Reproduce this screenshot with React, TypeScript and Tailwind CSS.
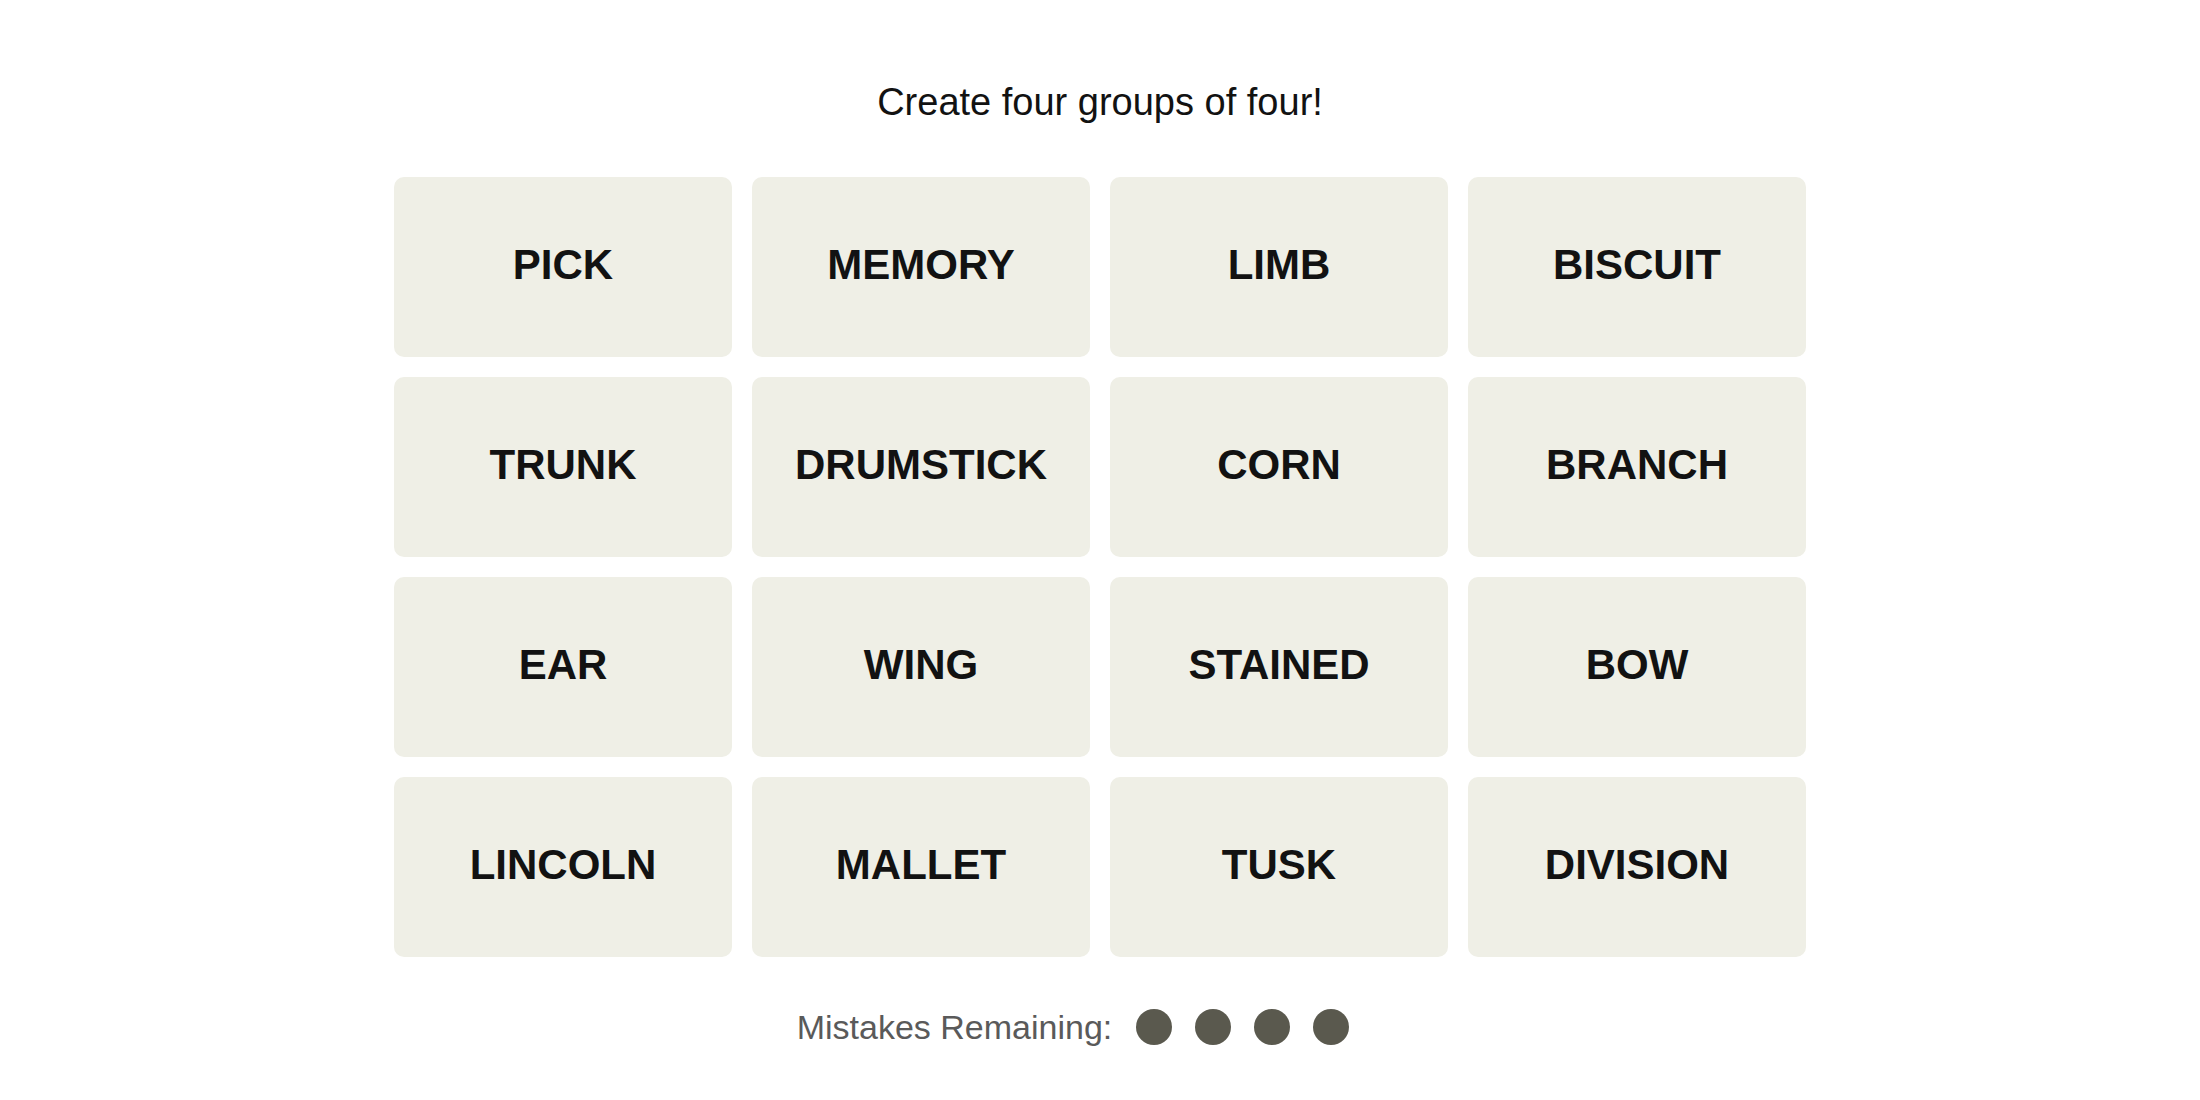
import React from "react";

const words: string[] = [
    "PICK", "MEMORY", "LIMB", "BISCUIT",
    "TRUNK", "DRUMSTICK", "CORN", "BRANCH",
    "EAR", "WING", "STAINED", "BOW",
    "LINCOLN", "MALLET", "TUSK", "DIVISION",
];

const App: React.FC = () => {
    const mistakesLeft = 4;

    return (
        <div className="min-h-screen bg-white font-['Liberation_Sans',Arial,sans-serif]">
            <div className="flex flex-col items-center pt-[80px]">
                {/* heading */}
                <p className="text-[38px] leading-[44px] text-[#121212]">Create four groups of four!</p>

                {/* board */}
                <div className="mt-[53px] grid w-[1412px] grid-cols-4 gap-[20px]">
                    {words.map((word) => (
                        <button
                            key={word}
                            className="flex h-[180px] items-center justify-center rounded-[10px] bg-[#efefe6] pb-[5px] text-[42px] font-bold text-[#121212]"
                        >
                            {word}
                        </button>
                    ))}
                </div>

                {/* mistakes */}
                <div className="mt-[50px] flex h-[40px] items-center pr-[54px]">
                    <span className="text-[34px] leading-[40px] text-[#5a5a5a]">Mistakes Remaining:</span>
                    <div className="ml-[24px] flex gap-[23px]">
                        {Array.from({ length: mistakesLeft }).map((_, i) => (
                            <span key={i} className="h-[36px] w-[36px] rounded-full bg-[#5a594e]" />
                        ))}
                    </div>
                </div>
            </div>
        </div>
    );
};

export default App;
